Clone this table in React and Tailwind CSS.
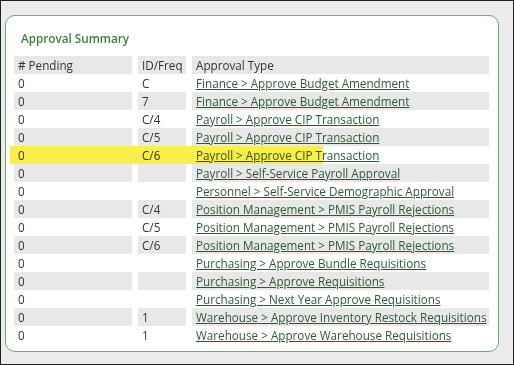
import React from "react";

const rows = [
  { freq: "C", type: "Finance > Approve Budget Amendment" },
  { freq: "7", type: "Finance > Approve Budget Amendment" },
  { freq: "C/4", type: "Payroll > Approve CIP Transaction" },
  { freq: "C/5", type: "Payroll > Approve CIP Transaction" },
  { freq: "C/6", type: "Payroll > Approve CIP Transaction", marked: true },
  { freq: "", type: "Payroll > Self-Service Payroll Approval" },
  { freq: "", type: "Personnel > Self-Service Demographic Approval" },
  { freq: "C/4", type: "Position Management > PMIS Payroll Rejections" },
  { freq: "C/5", type: "Position Management > PMIS Payroll Rejections" },
  { freq: "C/6", type: "Position Management > PMIS Payroll Rejections" },
  { freq: "", type: "Purchasing > Approve Bundle Requisitions" },
  { freq: "", type: "Purchasing > Approve Requisitions" },
  { freq: "", type: "Purchasing > Next Year Approve Requisitions" },
  { freq: "1", type: "Warehouse > Approve Inventory Restock Requisitions" },
  { freq: "1", type: "Warehouse > Approve Warehouse Requisitions" },
];

export default function App() {
  return (
    <div
      className="w-[514px] h-[365px] bg-[#ececec] border border-[#222] pt-[14px] pl-[4px] text-[11.7px] text-[#333]"
      style={{ fontFamily: '"Open Sans", "Noto Sans", sans-serif' }}
    >
      <div className="w-[494px] h-[337px] bg-white border border-[#5cb85c] rounded-[10px] pt-[12px] pl-[8px]">
        <h2 className="pl-[7px] text-[11.7px] font-semibold text-[#3f7f3f] leading-[20px]">Approval Summary</h2>
        <table className="mt-[8px] table-fixed border-separate border-spacing-x-[6px] border-spacing-y-0 w-[487px] -ml-[6px] leading-[18px]">
          <thead>
            <tr className="bg-[#e8e8e8]">
              <th className="w-[118px] h-[18px] text-left font-normal pl-[4px]"># Pending</th>
              <th className="w-[48px] text-left font-normal pl-[4px]">ID/Freq</th>
              <th className="text-left font-normal pl-[4px]">Approval Type</th>
            </tr>
          </thead>
          <tbody>
            {rows.map((r, i) => {
              const bg = i % 2 === 1 ? "bg-[#e8e8e8]" : "bg-white";
              return (
                <tr key={i} className={bg}>
                  <td className="relative h-[18px] pl-[4px]">
                    {r.marked && (
                      <div className="absolute left-[-4px] top-0 w-[313px] h-[18px] bg-[#fcee4a] blur-[0.6px] mix-blend-multiply pointer-events-none" />
                    )}
                    0
                  </td>
                  <td className="pl-[4px]">{r.freq}</td>
                  <td className="pl-[4px] whitespace-nowrap">
                    <a href="#" className="underline text-[#2c5a36]">{r.type}</a>
                  </td>
                </tr>
              );
            })}
          </tbody>
        </table>
      </div>
    </div>
  );
}
